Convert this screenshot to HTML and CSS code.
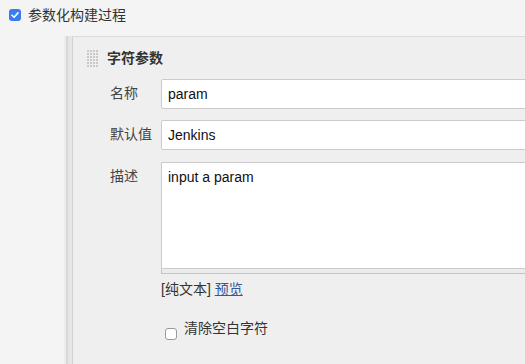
FILE: index.html
```html
<!DOCTYPE html>
<html lang="zh">
<head>
<meta charset="utf-8">
<link rel="stylesheet" href="styles.css">
</head>
<body>
<div class="top">
  <span class="cb cb-on"><svg viewBox="0 0 12 12" width="12" height="12"><path d="M3 6.2 L5.1 8.3 L9 3.9" fill="none" stroke="#fff" stroke-width="1.6" stroke-linecap="round" stroke-linejoin="round"/></svg></span>
  <span class="top-label">参数化构建过程</span>
</div>
<div class="section">
  <div class="stripe"></div>
  <div class="panel">
    <div class="head">
      <span class="handle"></span>
      <span class="title">字符参数</span>
    </div>
    <div class="row">
      <div class="label">名称</div>
      <div class="field"><div class="input">param</div></div>
    </div>
    <div class="row">
      <div class="label">默认值</div>
      <div class="field"><div class="input">Jenkins</div></div>
    </div>
    <div class="row row-desc">
      <div class="label">描述</div>
      <div class="field">
        <div class="textarea">input a param</div>
        <div class="grip"></div>
        <div class="fmt">[纯文本] <a class="link" href="#">预览</a></div>
        <div class="trim"><span class="cb cb-off"></span><span class="trim-label">清除空白字符</span></div>
      </div>
    </div>
  </div>
</div>
</body>
</html>
```
FILE: styles.css
```css
html, body {
  margin: 0;
  padding: 0;
}
body {
  width: 525px;
  height: 364px;
  overflow: hidden;
  background: #f4f4f4;
  font-family: "Liberation Sans", "Noto Sans CJK SC", sans-serif;
  font-size: 14px;
  color: #333;
}
.top {
  height: 36px;
  box-sizing: border-box;
  padding: 7px 0 0 9px;
  display: flex;
  align-items: flex-start;
}
.cb {
  display: block;
  width: 12px;
  height: 12px;
  box-sizing: border-box;
  border-radius: 3px;
  flex: none;
}
.cb svg { display: block; }
.cb-on {
  margin-top: 2px;
  background: #3a7bf0;
}
.top-label {
  margin-left: 7px;
  line-height: 16px;
}
.section {
  display: flex;
  margin-left: 64px;
  height: 328px;
}
.stripe {
  width: 8px;
  flex: none;
  background: linear-gradient(to right, #ececec 0, #ececec 2px, #d6d6d6 2px, #dadada 4px, #e4e4e4 4px, #e8e8e8 8px);
}
.panel {
  flex: 1;
  min-width: 0;
  overflow: hidden;
  background: #efefef;
  border-left: 1px solid #d2d2d2;
  border-top: 1px solid #dadada;
}
.head {
  display: flex;
  align-items: flex-start;
  margin: 12px 0 0 13px;
  height: 18px;
}
.handle {
  width: 12px;
  height: 18px;
  background-color: #c9c9c9;
  background-image: linear-gradient(90deg, #efefef 1px, transparent 1px), linear-gradient(#efefef 1px, transparent 1px);
  background-size: 3px 3px;
}
.title {
  margin-left: 9px;
  font-weight: bold;
  line-height: 18px;
  color: #333;
}
.row {
  display: grid;
  grid-template-columns: 51px 420px;
  margin: 12px 0 0 37px;
}
.row + .row { margin-top: 11px; }
.row.row-desc { margin-top: 12px; }
.label {
  padding-top: 6px;
  line-height: 16px;
  color: #444;
}
.input {
  height: 30px;
  box-sizing: border-box;
  border: 1px solid #cbcbcb;
  border-radius: 2px;
  background: #fff;
  padding: 0 6px;
  line-height: 28px;
  color: #111;
}
.textarea {
  height: 107px;
  box-sizing: border-box;
  border: 1px solid #cbcbcb;
  background: #fff;
  padding: 6px 6px;
  line-height: 16px;
  color: #111;
}
.grip {
  height: 4px;
  border-left: 1px solid #c4c4c4;
  border-bottom: 1px solid #c4c4c4;
  background: #ececec;
}
.fmt {
  margin-top: 7px;
  line-height: 16px;
  color: #333;
}
.link {
  color: #34569a;
  text-decoration: underline;
}
.trim {
  display: flex;
  align-items: flex-start;
  margin-top: 23px;
  padding-left: 4px;
}
.cb-off {
  margin-top: 8px;
  background: #fff;
  border: 1px solid #9a9a9a;
}
.trim-label {
  margin-left: 7px;
  line-height: 16px;
  color: #333;
}
```
